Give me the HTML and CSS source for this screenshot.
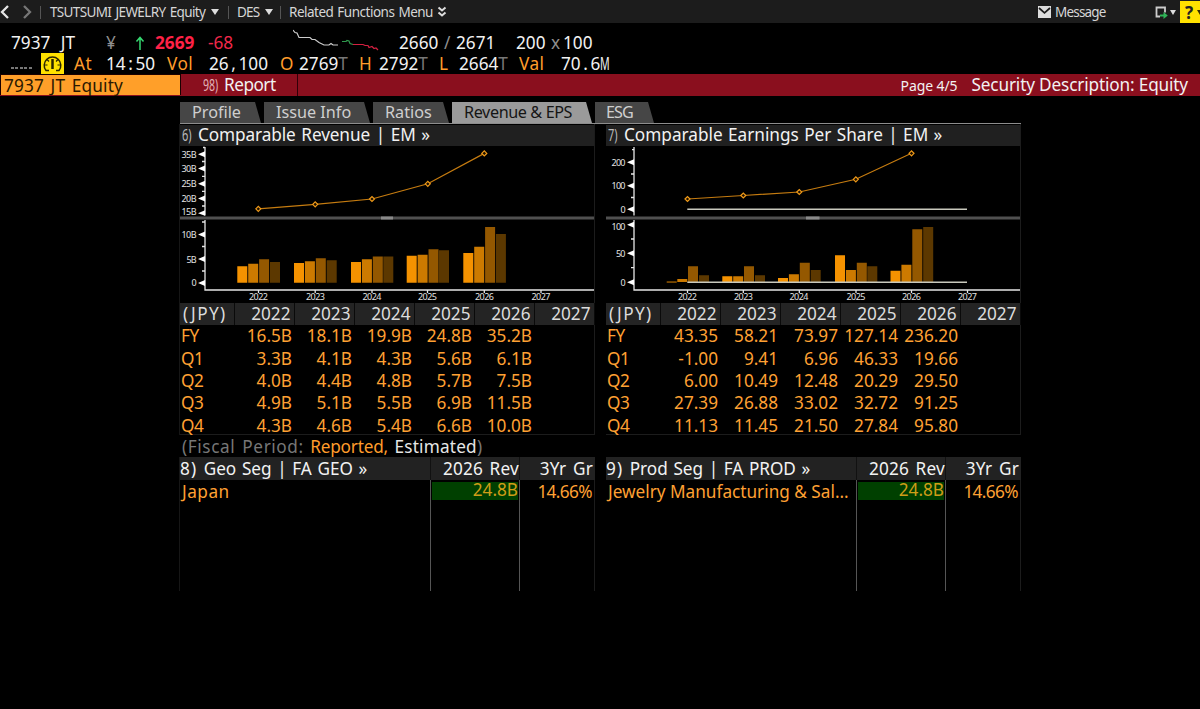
FILE: index.html
```html
<!DOCTYPE html>
<html lang="en">
<head>
<meta charset="utf-8">
<title>7937 JT Equity - Security Description</title>
<link rel="stylesheet" href="styles.css">
</head>
<body>
<div class="terminal">
  <header class="topbar">
    <svg class="nav" width="40" height="23" viewBox="0 0 40 23"><path d="M8 5 2 11l6 6" fill="none" stroke="#e6e6e6" stroke-width="2.300"/><path d="m24 5 6 6-6 6" fill="none" stroke="#777" stroke-width="2.300"/></svg>
    <div class="crumb c1"><span class="t1">TSUTSUMI JEWELRY Equity</span><i class="caret"></i></div>
    <div class="crumb c2"><span class="t2">DES</span><i class="caret"></i></div>
    <div class="crumb c3"><span class="t3">Related Functions Menu</span><svg width="10" height="12" viewBox="0 0 10 12"><path d="m1.500 1.500 3.500 3 3.500-3M1.500 6.500 5 9.500l3.500-3" fill="none" stroke="#ddd" stroke-width="2"/></svg></div>
    <div class="message"><svg width="13" height="12" viewBox="0 0 13 12"><path d="M0 0h13v12H0z" fill="#ddd"/><path d="m1 2 5.500 4.800L12 2" fill="none" stroke="#1c1c1c" stroke-width="1.700"/></svg><span class="t4">Message</span></div>
    <div class="export"><svg width="13" height="13" viewBox="0 0 13 13"><path d="M5 10.500H1.500v-9H10v5" fill="none" stroke="#ccc" stroke-width="1.800"/><path d="M5 8.500h3.500V6L12.800 9.500l-4.300 3.500v-2.500H5z" fill="#2fb457"/></svg><i class="caret small"></i></div>
    <div class="help">?<i class="caret tiny"></i></div>
  </header>

  <section class="quote">
    <div class="line price">
      <span class="wide">7937 JT</span><span class="dim">¥</span><svg width="20" height="20" viewBox="0 0 20 20"><path d="M5 17V5M1.500 8.500 5 4.500l3.500 4" fill="none" stroke="#35d870" stroke-width="1.500"/></svg><b class="red">2669</b><span class="red">-68</span>
      <svg class="spark" width="106" height="22" viewBox="0 0 106 22"><g fill="none" stroke-width="1.200"><path stroke="#ccc" d="M0 1l2 2.500 2 .5 2 4.500h11l2 2h3l4 3 5 2.500h5l2-1.500 2 1.500h5"/><path stroke="#2f9a4d" d="M49 12.500h4l1-1 2 .5 1 2.500 3 1"/><path stroke="#d42040" d="M60 15.500h10l2 1 3 0 1 2 3-1 2 2 2-.5 2 2"/></g></svg>
      <span>2660</span><span class="dim">/</span><span>2671</span><span>200</span><span class="dim">x</span><span>100</span>
    </div>
    <div class="line stats">
      <span class="dots"></span>
      <svg class="gauge" width="23" height="22" viewBox="0 0 23 22"><path fill="#ffe100" d="M0 0h23v22H0z"/><g fill="none" stroke="#2b2600"><path stroke-width="1.500" d="M8 17.500H5a8.300 8.300 0 1 1 13 0h-3"/><path stroke-width="1.200" d="M3.500 12h3M16.500 12h3M6 6.500l2 2M17 6.500l-2 2"/><path stroke-width="2.500" d="M11.500 6v10"/></g></svg>
      <span class="org">At</span><span>14<i>:</i>50</span><span class="org">Vol</span><span>26<i>,</i>100</span><span class="org">O</span><span>2769<em>T</em></span><span class="org">H</span><span>2792<em>T</em></span><span class="org">L</span><span>2664<em>T</em></span><span class="org">Val</span><span>70<i>.</i>6<i class="m">M</i></span>
    </div>
  </section>

  <section class="redbar">
    <div class="ticker">7937 JT Equity</div>
    <div class="report"><small>98)</small><span>Report</span></div>
    <div class="desc"><span class="page">Page 4/5</span><span class="title">Security Description: Equity</span></div>
  </section>

  <main class="content">
    <nav class="tabs">
      <div class="tab p"><span>Profile</span></div><div class="tab i"><span>Issue Info</span></div><div class="tab r"><span>Ratios</span></div><div class="tab e active"><span>Revenue &amp; EPS</span></div><div class="tab g"><span>ESG</span></div>
    </nav>
    <div class="columns">
      <section class="panel">
        <h2><small>6)</small><span class="h-rev">Comparable Revenue | EM »</span></h2>
        <svg class="chart" width="414" height="157" viewBox="180 146 414 157">
          <path class="axis" d="M205 147v68.500M205 220v70h389M203 147.500h2M202 161.500h3M202 176.300h3M202 191.300h3M202 206h3M202 222h3M202 246.500h3M202 271h3M258.500 290v3M315.200 290v3M372 290v3M427.500 290v3M484.300 290v3M541 290v3"/>
          <path class="arrow" d="M198 154.300l7-3v6zM198 168.600l7-3v6zM198 183.700l7-3v6zM198 198.500l7-3v6zM198 213.200l7-3v5.500zM198 234.500l7-3v6zM198 259l7-3v6zM198 283l7-3v6z"/>
          <path fill="#505050" d="M180 216.500h414v3H180z"/><path fill="#8a8a8a" d="M381 216.500h12v3h-12z"/>
          <g class="lab"><text x="181.500" y="157.500" textLength="15">35B</text><text x="181.500" y="172" textLength="15">30B</text><text x="181.500" y="187" textLength="15">25B</text><text x="181.500" y="202" textLength="15">20B</text><text x="181.500" y="214.500" textLength="15">15B</text><text x="181.500" y="238" textLength="15">10B</text><text x="186.500" y="262.500" textLength="10">5B</text><text x="191.500" y="286">0</text>
          <text x="249" y="300" textLength="19">2022</text><text x="306" y="300" textLength="19">2023</text><text x="362.500" y="300" textLength="19">2024</text><text x="418" y="300" textLength="19">2025</text><text x="475" y="300" textLength="19">2026</text><text x="531.500" y="300" textLength="19">2027</text></g>
          <path class="trend" d="M258.300 208.800 315.200 204.300 372 199 427.800 183.800 484.300 153.400"/>
          <path class="mark" d="M255.800 208.800l2.500-2.500 2.500 2.500-2.500 2.500zM312.700 204.300l2.500-2.500 2.500 2.500-2.500 2.500zM369.500 199l2.500-2.500 2.500 2.500-2.500 2.500zM425.300 183.800l2.500-2.500 2.500 2.500-2.500 2.500zM481.800 153.400l2.500-2.500 2.500 2.500-2.500 2.500z"/>
          <path fill="#f59200" d="M237.300 266.300h10v16.400h-10zM294 263h10v19.700h-10zM351 262h10v20.700h-10zM406.700 255.700h10v27h-10zM463.300 253h10v29.700h-10z"/>
          <path fill="#cc7a00" d="M248.200 263.700h10v19h-10zM304.900 261.300h10v21.400h-10zM361.900 259.300h10v23.400h-10zM417.600 254.700h10v28h-10zM474.200 246.700h10v36h-10z"/>
          <path fill="#945800" d="M259.100 259.300h10v23.400h-10zM315.800 258.300h10v24.400h-10zM372.800 256.500h10v26.200h-10zM428.500 249.300h10v33.400h-10zM485.100 227h10v55.700h-10z"/>
          <path fill="#5c3800" d="M270 262h10v20.700h-10zM326.700 260.300h10v22.400h-10zM383.300 256.500h10v26.200h-10zM439 250.300h10v32.400h-10zM495.900 234h10v48.700h-10z"/>
        </svg>
        <table class="fin">
          <tr><th>(JPY)</th><th>2022</th><th>2023</th><th>2024</th><th>2025</th><th>2026</th><th>2027</th></tr>
          <tr><td>FY</td><td>16.5B</td><td>18.1B</td><td>19.9B</td><td>24.8B</td><td>35.2B</td><td></td></tr>
          <tr><td>Q1</td><td>3.3B</td><td>4.1B</td><td>4.3B</td><td>5.6B</td><td>6.1B</td><td></td></tr>
          <tr><td>Q2</td><td>4.0B</td><td>4.4B</td><td>4.8B</td><td>5.7B</td><td>7.5B</td><td></td></tr>
          <tr><td>Q3</td><td>4.9B</td><td>5.1B</td><td>5.5B</td><td>6.9B</td><td>11.5B</td><td></td></tr>
          <tr><td>Q4</td><td>4.3B</td><td>4.6B</td><td>5.4B</td><td>6.6B</td><td>10.0B</td><td></td></tr>
        </table>
      </section>
      <section class="panel">
        <h2><small>7)</small><span class="h-eps">Comparable Earnings Per Share | EM »</span></h2>
        <svg class="chart" width="414" height="157" viewBox="606 146 414 157">
          <path class="axis" d="M634 147v68.500M634 220v70h386M632 149.700h2M631 174h3M631 197.500h3M631 239h3M631 267.700h3M687.500 290v3M743.300 290v3M799.300 290v3M856 290v3M911.500 290v3M967.500 290v3"/>
          <path class="arrow" d="M627 162.300l7-3v6zM627 185.700l7-3v6zM627 209.200l7-3v6zM627 224.700l7-3v6zM627 253.300l7-3v6zM627 282.200l7-3v6z"/>
          <path fill="#505050" d="M606 216.500h414v3H606z"/><path fill="#8a8a8a" d="M806 216.500h13.500v3H806z"/>
          <g class="lab"><text x="611.500" y="165.500" textLength="14">200</text><text x="611.500" y="189" textLength="14">100</text><text x="620.500" y="212.500">0</text><text x="611.500" y="229.500" textLength="14">100</text><text x="616" y="256.500" textLength="9.500">50</text><text x="620.500" y="285.500">0</text>
          <text x="678" y="300" textLength="19">2022</text><text x="734" y="300" textLength="19">2023</text><text x="789.500" y="300" textLength="19">2024</text><text x="846.500" y="300" textLength="19">2025</text><text x="902" y="300" textLength="19">2026</text><text x="958" y="300" textLength="19">2027</text></g>
          <path class="trend" d="M687.500 199 743.300 195.500 799.300 192 855.800 179.300 911.500 153.300"/>
          <path class="mark" d="M685 199l2.500-2.500 2.500 2.500-2.500 2.500zM740.800 195.500l2.500-2.500 2.500 2.500-2.500 2.500zM796.800 192l2.500-2.500 2.500 2.500-2.500 2.500zM853.300 179.300l2.500-2.500 2.500 2.500-2.500 2.500zM909 153.300l2.500-2.500 2.500 2.500-2.500 2.500z"/>
          <path fill="#f59200" d="M722.300 276.300h10v6h-10zM778 278h10v4h-10zM835 255.300h10v27h-10zM890.500 270.700h10v11.500h-10z"/>
          <path fill="#945800" d="M666.700 281.300h10v1.500h-10z"/>
          <path fill="#cc7a00" d="M677.300 279h10v3h-10zM733.200 276.300h10v6h-10zM788.900 274.300h10v8h-10zM845.900 270h10v12h-10zM901.400 264.700h10v17.500h-10z"/>
          <path fill="#945800" d="M688 266.300h10v16h-10zM744 266.300h10v16h-10zM799.800 262.700h10v19.500h-10zM856.800 262.700h10v19.500h-10zM912.300 229.300h10v53h-10z"/>
          <path fill="#5c3800" d="M699 275.300h10v7h-10zM755 275.300h10v7h-10zM810.700 270h10v12h-10zM867.300 266.300h10v16h-10zM923.200 227h10v55h-10z"/>
          <path fill="none" stroke="#c9c9bd" stroke-width="1.500" d="M687.300 209.200H967M687.300 282.200H967"/>
        </svg>
        <table class="fin">
          <tr><th>(JPY)</th><th>2022</th><th>2023</th><th>2024</th><th>2025</th><th>2026</th><th>2027</th></tr>
          <tr><td>FY</td><td>43.35</td><td>58.21</td><td>73.97</td><td>127.14</td><td>236.20</td><td></td></tr>
          <tr><td>Q1</td><td>-1.00</td><td>9.41</td><td>6.96</td><td>46.33</td><td>19.66</td><td></td></tr>
          <tr><td>Q2</td><td>6.00</td><td>10.49</td><td>12.48</td><td>20.29</td><td>29.50</td><td></td></tr>
          <tr><td>Q3</td><td>27.39</td><td>26.88</td><td>33.02</td><td>32.72</td><td>91.25</td><td></td></tr>
          <tr><td>Q4</td><td>11.13</td><td>11.45</td><td>21.50</td><td>27.84</td><td>95.80</td><td></td></tr>
        </table>
      </section>
    </div>
    <p class="fiscal"><span class="fp">(Fiscal Period:</span> <span class="org rep">Reported,</span> <span class="est">Estimated</span>)</p>
    <div class="columns">
      <section class="seg">
        <div class="sh"><span class="num">8)</span> <span class="s-geo">Geo Seg | FA GEO »</span></div><div class="sh n">2026 Rev</div><div class="sh n">3Yr Gr</div>
        <div class="sb"><span class="s-jap">Japan</span></div><div class="sb n"><span class="green">24.8B</span></div><div class="sb n">14.66%</div>
      </section>
      <section class="seg">
        <div class="sh"><span class="num">9)</span> <span class="s-geo">Prod Seg | FA PROD »</span></div><div class="sh n">2026 Rev</div><div class="sh n">3Yr Gr</div>
        <div class="sb"><span>Jewelry Manufacturing &amp; Sal…</span></div><div class="sb n"><span class="green">24.8B</span></div><div class="sb n">14.66%</div>
      </section>
    </div>
  </main>
</div>
</body>
</html>
```
FILE: styles.css
```css
* { box-sizing: border-box; }
body { margin: 0; background: #000; color: #f2f2f2; font: 17.2px/22px "Noto Sans", sans-serif; }
.terminal { width: 1200px; height: 709px; overflow: hidden; background: #000; white-space: nowrap; }
.org { color: #ff9c2b; }

.topbar { display: flex; align-items: center; height: 23px; background: #1c1c1c; color: #d6d6d6; font-size: 13.5px; line-height: 23px; padding-top: 1px; }
.crumb { display: flex; align-items: center; height: 13px; border-left: 1px solid #555; padding-left: 9px; gap: 6px; }
.c1 { width: 188px; }
.c2 { width: 52px; padding-left: 8px; }
.c3 { width: 180px; padding-left: 8px; gap: 4px; }
.t1 { letter-spacing: -0.65px; word-spacing: 1.5px; }
.t2 { letter-spacing: -0.8px; }
.t3 { letter-spacing: -0.5px; word-spacing: 1px; }
.t4 { letter-spacing: -0.8px; }
.caret { border: 4px solid transparent; border-top: 6px solid #ddd; border-bottom: 0; }
.caret.small { border-width: 5px 3px 0; }
.caret.tiny { border-width: 5px 3px 0; border-top-color: #332b00; }
.message { display: flex; align-items: center; gap: 4px; margin-left: 578px; width: 117px; }
.export { display: flex; align-items: center; gap: 2px; width: 25px; }
.help { display: flex; align-items: center; gap: 4px; flex: none; width: 20px; height: 22px; padding-left: 5px; background: #ffe100; color: #222; font-size: 17px; font-weight: 700; overflow: hidden; }

.quote { height: 51px; padding-top: 7px; line-height: 19px; }
.line { display: grid; align-items: center; justify-content: start; }
.price { padding-left: 11px; grid-template-columns: 95px 29px 20px 53px 85px 106px 45px 12px 60px 35px 12px 40px; grid-template-rows: 25px; height: 23px; }
.wide { word-spacing: 6px; }
.dim { color: #8f8f8f; }
.red { color: #f0284a; }
b.red { color: #ff2146; }
.spark { align-self: start; margin-top: -1px; }
.stats { padding-left: 11px; grid-template-columns: 30px 33px 32px 61px 42px 71px 19px 60px 20px 60px 20px 60px 42px 60px; grid-template-rows: 21px; height: 21px; }
.stats .org { letter-spacing: .5px; }
.stats i { display: inline-block; width: 9.8px; text-align: center; font-style: normal; }
.stats .m { transform: scaleX(.62); transform-origin: 0 50%; text-align: left; }
.stats em { font-style: normal; color: #777; }
.dots { width: 22px; height: 2px; background: repeating-linear-gradient(90deg, #777 0 3px, transparent 3px 4.500px); margin-top: 8px; }

.redbar { display: flex; height: 22px; background: #8a0f1e; line-height: 22px; }
.ticker { width: 181px; height: 21px; padding-left: 3px; background: #ff9f29; color: #2a1800; border: solid #1a0000; border-width: 1px 1px 0 1px; letter-spacing: .2px; word-spacing: 1.8px; }
.report { display: flex; width: 117px; padding-left: 22px; border-right: 1px solid #300008; gap: 5px; line-height: 21px; letter-spacing: -.5px; }
.report small { display: inline-block; width: 16px; font-size: 17px; color: #e3b3b8; letter-spacing: 0; transform: scaleX(.62); transform-origin: 0 50%; }
.desc { display: flex; justify-content: flex-end; flex: 1; padding-right: 12px; gap: 14px; line-height: 21px; }
.title { letter-spacing: -.15px; }
.page { font-size: 14px; line-height: 23px; letter-spacing: -.1px; }

.content { width: 841px; margin: 5px 0 0 180px; padding-top: 1px; }
.tabs { display: flex; height: 22px; gap: 3px; border-bottom: 1px solid #8d8d8d; }
.tab { height: 21px; background: #464646; color: #cfcfcf; clip-path: polygon(0 0, calc(100% - 6px) 0, 100% 100%, 0 100%); font-size: 16.200px; line-height: 20px; padding-left: 12px; }
.tab.active { background: #9a9a9a; color: #151515; }
.p { width: 81px; }
.i { width: 106px; }
.r { width: 76px; }
.e { width: 140px; letter-spacing: -.4px; }
.g { width: 59px; padding-left: 11px; letter-spacing: -.9px; }
.columns { display: flex; gap: 11px; }
.panel { width: 415px; height: 311px; border: solid #1c1c1c; border-width: 0 1px 1px 0; }
.panel:first-child, .seg:first-child { box-shadow: -1px 0 #161616; }
h2 { display: flex; height: 21px; margin: 1px 0 0; padding-left: 2px; background: #202020; font-size: 17.2px; font-weight: 400; line-height: 20px; }
h2 small { display: inline-block; width: 16px; color: #bbb; font-size: 17px; transform: scaleX(.65); transform-origin: 0 50%; }
.h-rev { letter-spacing: -.1px; word-spacing: 1.3px; }
.h-eps { word-spacing: .9px; }
.chart { display: block; }
.axis { fill: none; stroke: #e6e6e6; stroke-width: 1.300; }
.arrow { fill: #fff; }
.lab { fill: #e4e4e4; font: 9px "Noto Sans", sans-serif; }
.trend { fill: none; stroke: #c67c10; stroke-width: 1.200; }
.mark { fill: #1c1000; stroke: #f09a18; stroke-width: 1.200; }

.fin { width: 414px; table-layout: fixed; border-collapse: collapse; color: #ffa033; }
.fin tr { height: 22.3px; }
.fin th, .fin td { padding: 0 2px 0 0; width: 60px; font-weight: 400; text-align: right; line-height: 22px; }
.fin th { height: 22px; background: #242424; color: #dcdcdc; border-right: 1px solid #0a0a0a; padding: 0 3px 0 0; line-height: 21px; padding-bottom: 1px; }
.fin th:first-child { width: 54px; text-align: left; padding-left: 3px; padding-right: 0; letter-spacing: 1.4px; }
.fin td:first-child { text-align: left; padding-left: 1px; letter-spacing: -.3px; }
.fiscal { height: 22px; margin: 0; padding-left: 2px; color: #777; line-height: 23px; word-spacing: 2px; }
.fp { letter-spacing: .6px; }
.rep { letter-spacing: -.2px; }
.est { color: #e6e6e6; letter-spacing: .2px; }

.seg { display: grid; grid-template-columns: 251px 89px 75px; grid-template-rows: 23px 111px; width: 415px; border-right: 1px solid #1c1c1c; }
.sh { background: #222; border-right: 1px solid #111; line-height: 23px; word-spacing: 1.9px; }
.num { letter-spacing: 1.2px; }
.s-geo { word-spacing: 1.3px; letter-spacing: -.05px; }
.sh.n { letter-spacing: .2px; }
.sh:nth-child(3) { border-right: 0; padding-right: 2px; }
.n { text-align: right; }
.sb { color: #ffa033; border-right: 1px solid #555; padding-left: 2px; line-height: 23px; }
.sb.n { padding-left: 1px; }
.sb:nth-child(6) { border-right: 0; padding-right: 3px; letter-spacing: -.6px; }
.s-jap { letter-spacing: .5px; }
.green { display: block; height: 18px; margin-top: 2px; background: #004000; color: #cf9d18; line-height: 16px; margin-right: 1px; }
```
